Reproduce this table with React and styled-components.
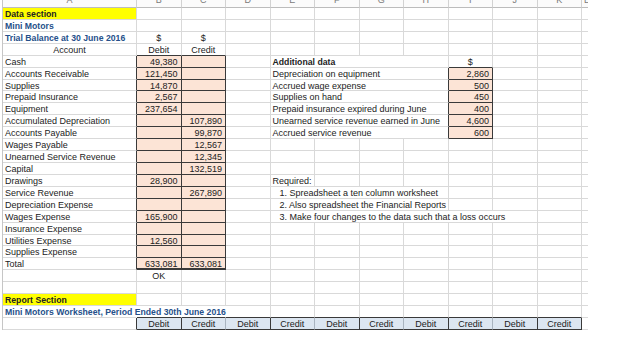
import React from 'react'
import styled, { createGlobalStyle } from 'styled-components'

// colours picked off the screenshot
const GRID = '#d9d9d9'
const DARK = '#3a3a3a'
const PEACH = '#fce4d6'
const YELLOW = '#ffff00'
const SKY = '#dce6f1'
const NAVY = '#25508a'

const LETTERS = ['A', 'B', 'C', 'D', 'E', 'F', 'G', 'H', 'I', 'J', 'K', 'L']
const ROWS = 27

const trialBalance = [
  ['Cash', '49,380', ''],
  ['Accounts Receivable', '121,450', ''],
  ['Supplies', '14,870', ''],
  ['Prepaid Insurance', '2,567', ''],
  ['Equipment', '237,654', ''],
  ['Accumulated Depreciation', '', '107,890'],
  ['Accounts Payable', '', '99,870'],
  ['Wages Payable', '', '12,567'],
  ['Unearned Service Revenue', '', '12,345'],
  ['Capital', '', '132,519'],
  ['Drawings', '28,900', ''],
  ['Service Revenue', '', '267,890'],
  ['Depreciation Expense', '', ''],
  ['Wages Expense', '165,900', ''],
  ['Insurance Expense', '', ''],
  ['Utilities Expense', '12,560', ''],
  ['Supplies Expense', '', ''],
  ['Total', '633,081', '633,081'],
]

const additional = [
  ['Depreciation on equipment', '2,860'],
  ['Accrued wage expense', '500'],
  ['Supplies on hand', '450'],
  ['Prepaid insurance expired during June', '400'],
  ['Unearned service revenue earned in June', '4,600'],
  ['Accrued service revenue', '600'],
]

const required = [
  ['1. Spreadsheet a ten column worksheet', 4],
  ['2. Also spreadsheet the Financial Reports', 4],
  ['3. Make four changes to the data such that a loss occurs', 6],
]

// builds a 27 x 12 matrix of cell specs
function buildSheet() {
  const sheet = Array.from({ length: ROWS }, () => LETTERS.map(() => ({})))
  const set = (r, c, props) => Object.assign(sheet[r - 1][c], props)
  const spanOver = (r, c, n) => {
    set(r, c, { span: n })
    for (let i = 1; i < n; i++) set(r, c + i, { skip: true })
  }

  set(1, 0, { t: 'Data section', bold: true, fill: YELLOW })
  set(2, 0, { t: 'Mini Motors', bold: true, color: NAVY })
  set(3, 0, { t: 'Trial Balance at 30 June 2016', bold: true, color: NAVY })
  set(3, 1, { t: '$', align: 'center' })
  set(3, 2, { t: '$', align: 'center' })
  set(4, 0, { t: 'Account', align: 'center' })
  set(4, 1, { t: 'Debit', align: 'center', bb: DARK })
  set(4, 2, { t: 'Credit', align: 'center', bb: DARK })

  trialBalance.forEach(([name, dr, cr], i) => {
    const r = 5 + i
    const last = i === trialBalance.length - 1
    set(r, 0, { t: name, rb: DARK })
    set(r, 1, { t: dr, align: 'right', fill: PEACH, rb: DARK, bb: DARK, bw: last ? 2 : 1 })
    set(r, 2, { t: cr, align: 'right', fill: PEACH, rb: DARK, bb: DARK, bw: last ? 2 : 1 })
  })
  set(23, 1, { t: 'OK', align: 'center' })

  spanOver(5, 4, 4)
  set(5, 4, { t: 'Additional data', bold: true })
  set(5, 8, { t: '$', align: 'center', bb: DARK })
  additional.forEach(([label, amount], i) => {
    const r = 6 + i
    spanOver(r, 4, 4)
    set(r, 4, { t: label, rb: DARK })
    set(r, 8, { t: amount, align: 'right', fill: PEACH, rb: DARK, bb: DARK })
  })

  set(15, 4, { t: 'Required:' })
  required.forEach(([text, span], i) => {
    spanOver(16 + i, 4, span)
    set(16 + i, 4, { t: text, indent: true })
  })

  set(25, 0, { t: 'Report Section', bold: true, fill: YELLOW })
  set(26, 0, { t: 'Mini Motors Worksheet, Period Ended 30th June 2016', bold: true, color: NAVY, rb: 'transparent' })
  set(26, 1, { rb: 'transparent' })
  set(26, 2, { rb: 'transparent' })
  set(27, 0, { rb: DARK })
  for (let c = 1; c <= 10; c++) {
    const debit = c % 2 === 1
    set(26, c, { bb: DARK })
    set(27, c, {
      t: debit ? 'Debit' : 'Credit',
      align: 'center',
      fill: SKY,
      bb: DARK,
      rb: debit || c === 10 ? DARK : '#a9b4c0',
    })
  }
  return sheet
}

const GlobalStyle = createGlobalStyle`
  html, body {
    margin: 0;
    background: #fff;
  }
  body {
    font-family: "Liberation Sans", Arial, sans-serif;
  }
`

const Sheet = styled.div`
  display: grid;
  grid-template-columns: 134px repeat(10, 44.5px) 6px;
  grid-template-rows: 8px repeat(${ROWS}, 11.93px);
  width: max-content;
  margin-left: 2px;
  border-left: 1px solid #c6c6c6;
`

const ColHead = styled.div`
  box-sizing: border-box;
  overflow: hidden;
  background: #fbfbfb;
  border-right: ${p => (p.$last ? 'none' : '1px solid #d2d2d2')};
  border-bottom: 1px solid #bcbcbc;
  color: #7a7a7a;
  font-size: 9px;
  text-align: ${p => (p.$last ? 'left' : 'center')};
  padding-left: ${p => (p.$last ? '2px' : '0')};

  span {
    display: block;
    line-height: 9px;
    margin-top: -4px;
  }
`

const Cell = styled.div`
  box-sizing: border-box;
  grid-column: span ${p => p.$span || 1};
  border-right: ${p => (p.$last ? 'none' : `1px solid ${p.$rb || GRID}`)};
  border-bottom: ${p => p.$bw || 1}px solid ${p => p.$bb || GRID};
  background: ${p => p.$fill || 'transparent'};
  padding: 0 ${p => (p.$align === 'right' ? '3px' : '2px')} 0 ${p => (p.$indent ? '9px' : '2px')};
  font-size: ${p => (p.$bold ? '8.7px' : '9px')};
  line-height: 12px;
  font-weight: ${p => (p.$bold ? 700 : 400)};
  color: ${p => p.$color || '#222'};
  text-align: ${p => p.$align || 'left'};
  white-space: nowrap;
`

export default function App() {
  const sheet = buildSheet()

  return (
    <>
      <GlobalStyle />
      <Sheet>
        {LETTERS.map((l, i) => (
          <ColHead key={l} $last={i === LETTERS.length - 1}>
            <span>{l}</span>
          </ColHead>
        ))}
        {sheet.map((row, r) =>
          row.map((cell, c) =>
            cell.skip ? null : (
              <Cell
                key={`${r}-${c}`}
                $span={cell.span}
                $rb={cell.rb}
                $bb={cell.bb}
                $bw={cell.bw}
                $fill={cell.fill}
                $bold={cell.bold}
                $color={cell.color}
                $align={cell.align}
                $indent={cell.indent}
                $last={c === LETTERS.length - 1}
              >
                {cell.t}
              </Cell>
            )
          )
        )}
      </Sheet>
    </>
  )
}
